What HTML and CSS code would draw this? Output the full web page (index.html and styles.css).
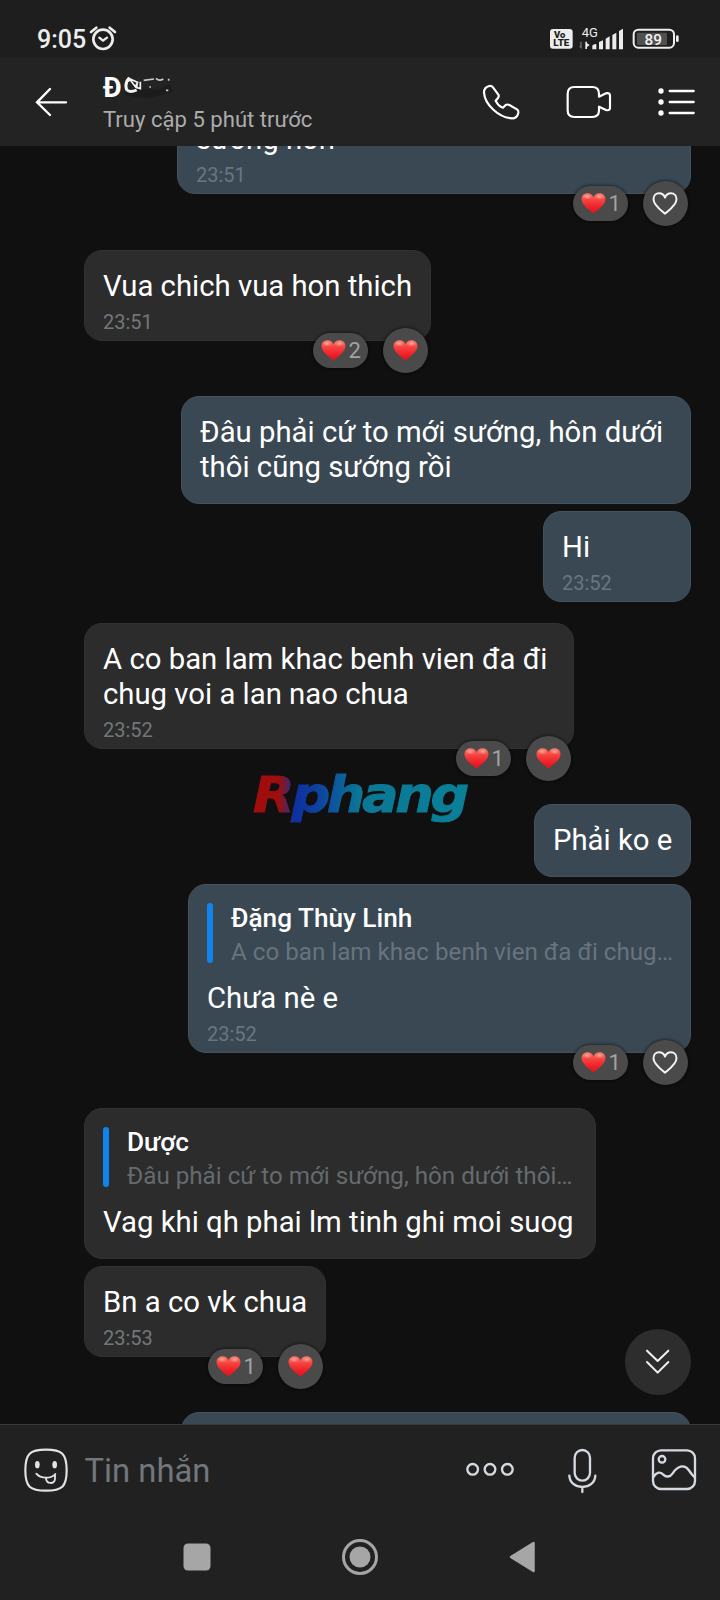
FILE: index.html
```html
<!DOCTYPE html>
<html lang="vi">
<head>
<meta charset="utf-8">
<title>Tin nhắn</title>
<link rel="stylesheet" href="styles.css">
</head>
<body>
<svg class="defs" width="0" height="0" aria-hidden="true">
  <defs>
    <linearGradient id="heart-fill" x1="0" y1="0" x2="0" y2="1">
      <stop offset="0" stop-color="#f9786a"/>
      <stop offset="0.35" stop-color="#f5423f"/>
      <stop offset="0.7" stop-color="#ee2029"/>
      <stop offset="1" stop-color="#d8141f"/>
    </linearGradient>
    <radialGradient id="heart-shine">
      <stop offset="0" stop-color="#ffc9b4" stop-opacity="0.85"/>
      <stop offset="1" stop-color="#ff8d7c" stop-opacity="0"/>
    </radialGradient>
    <symbol id="heart" viewBox="0 0 75 64">
      <path d="M37.500 63C30 55 1 38 1 19C1 8 9 1 19 1C28 1 34 6 37.500 13C41 6 47 1 56 1C66 1 74 8 74 19C74 38 45 55 37.500 63Z" fill="url(#heart-fill)"/>
      <ellipse cx="18" cy="11" rx="15" ry="9" fill="url(#heart-shine)"/>
      <ellipse cx="56" cy="11" rx="15" ry="9" fill="url(#heart-shine)"/>
    </symbol>
    <symbol id="heart-line" viewBox="0 0 78 70">
      <path d="M39 66C34 60 4 42 4 22C4 11 11 4 21 4C30 4 36 9 39 17C42 9 48 4 57 4C67 4 74 11 74 22C74 42 44 60 39 66Z" fill="none" stroke="#f4f4f4" stroke-width="6" stroke-linejoin="round"/>
    </symbol>
  </defs>
</svg>

<div class="phone">
  <div class="status">
    <span class="clock">9:05</span>
    <svg class="alarm" viewBox="267 70 84 90" width="28" height="30" fill="none" stroke="#ededed" stroke-linecap="round">
      <circle cx="309" cy="116" r="29" stroke-width="8"/>
      <path d="M273 94L289 81M345 94L329 81" stroke-width="8"/>
      <path d="M298 111L309 120L321 111" stroke-width="7" stroke-linejoin="round"/>
    </svg>
    <div class="status-right">
      <svg viewBox="567 70 75 90" width="25" height="30">
        <rect x="570" y="85" width="68" height="59" rx="9" fill="#ededed"/>
        <text class="volte" x="582" y="111" textLength="34" lengthAdjust="spacingAndGlyphs">Vo</text>
        <text class="volte" x="580" y="137" textLength="48" lengthAdjust="spacingAndGlyphs">LTE</text>
      </svg>
      <svg class="signal" viewBox="654 70 138 90" width="46" height="30" fill="#ededed">
        <text class="network" x="665" y="108">4G</text>
        <path d="M676 123H681V128L689 133L681 139V145H676Z"/>
        <path d="M665 123V145L657 136H661V123Z" fill="#777"/>
        <path d="M697 136Q697 132 709 130V146H697ZM717 124L729 119V146H717ZM737 114L749 107V146H737ZM757 103L769 96V146H757ZM777 91L789 84V146H777Z"/>
      </svg>
      <svg class="battery" viewBox="816 70 144 90" width="48" height="30">
        <rect x="821" y="87" width="121" height="54" rx="14" fill="none" stroke="#ededed" stroke-width="6"/>
        <rect x="831" y="96" width="90" height="37" rx="4" fill="#505050"/>
        <rect x="948" y="104" width="8" height="20" rx="4" fill="#ededed"/>
        <text class="charge" x="880" y="132" text-anchor="middle">89</text>
      </svg>
    </div>
  </div>

  <header class="header">
    <svg viewBox="102 246 105 120" width="35" height="40" fill="none" stroke="#fff" stroke-width="7" stroke-linecap="round">
      <path d="M198 307H111M150 267L111 307L150 345"/>
    </svg>
    <div class="contact">
      <div class="contact-name">Đ<svg class="scribble" viewBox="375 225 150 75" width="50" height="25" fill="none">
        <path d="M375 285L415 268L475 273L515 255L520 280L450 298L395 292Z" fill="#1c1c1c"/>
        <path d="M391 236Q376 252 383 272Q392 283 413 273" stroke="#f2f2f2" stroke-width="9"/>
        <path d="M389 236L409 263L417 248M392 239L415 250L413 266L424 269L424 248M381 249L393 244" stroke="#f2f2f2" stroke-width="5"/>
        <path d="M434 244L465 240M471 238Q480 248 493 240M451 264H456M501 274H508M509 239V245" stroke="#c8c8c8" stroke-width="5"/>
      </svg></div>
      <div class="contact-seen">Truy cập 5 phút trước</div>
    </div>
    <div class="actions">
      <svg viewBox="360 245 126 120" width="42" height="40" fill="none" stroke="#fff" stroke-width="6.500" stroke-linejoin="round">
        <path d="M372 276C372 266 380 259 388 257Q395 256 399 261L415 283Q418 288 414 293L407 301C412 311 420 319 429 322L437 314Q442 311 448 314L471 327Q476 331 475 337C473 347 466 354 456 354C417 352 374 313 372 276Z"/>
      </svg>
      <svg viewBox="615 246 144 120" width="48" height="40" fill="none" stroke="#fff" stroke-width="6.500" stroke-linejoin="round">
        <path d="M643 261H697Q717 261 717 281V290L738 280Q750 277 750 288V323Q750 333 738 330L717 320V331Q717 351 697 351H643Q623 351 623 331V281Q623 261 643 261Z"/>
      </svg>
      <svg viewBox="888 246 123 120" width="41" height="40" fill="#fff">
        <circle cx="903" cy="273" r="8"/><circle cx="903" cy="306" r="8"/><circle cx="903" cy="339" r="8"/>
        <path d="M929 273H1001M929 306H1001M929 339H1001" stroke="#fff" stroke-width="7" stroke-linecap="round"/>
      </svg>
    </div>
  </header>

  <main class="chat">
    <div class="bubble sent w-first reacted">
      <p class="text">sướng hơn</p>
      <time class="time">23:51</time>
      <div class="reactions"><span class="pill"><svg class="heart"><use href="#heart"/></svg>1</span><span class="round"><svg class="heart-o"><use href="#heart-line"/></svg></span></div>
    </div>
    <div class="bubble w-vua reacted">
      <p class="text">Vua chich vua hon thich</p>
      <time class="time">23:51</time>
      <div class="reactions"><span class="pill"><svg class="heart"><use href="#heart"/></svg>2</span><span class="round"><svg class="heart"><use href="#heart"/></svg></span></div>
    </div>
    <div class="bubble sent w-wide near">
      <p class="text">Đâu phải cứ to mới sướng, hôn dưới<br>thôi cũng sướng rồi</p>
    </div>
    <div class="bubble sent w-hi switch">
      <p class="text">Hi</p>
      <time class="time">23:52</time>
    </div>
    <div class="bubble w-aco reacted">
      <p class="text">A co ban lam khac benh vien đa đi<br>chug voi a lan nao chua</p>
      <time class="time">23:52</time>
      <div class="reactions"><span class="pill"><svg class="heart"><use href="#heart"/></svg>1</span><span class="round"><svg class="heart"><use href="#heart"/></svg></span></div>
    </div>
    <div class="bubble sent w-phai near">
      <p class="text">Phải ko e</p>
    </div>
    <div class="bubble sent w-quote reacted">
      <div class="quote">
        <div class="quote-name">Đặng Thùy Linh</div>
        <div class="quote-text">A co ban lam khac benh vien đa đi chug…</div>
      </div>
      <p class="text">Chưa nè e</p>
      <time class="time">23:52</time>
      <div class="reactions"><span class="pill"><svg class="heart"><use href="#heart"/></svg>1</span><span class="round"><svg class="heart-o"><use href="#heart-line"/></svg></span></div>
    </div>
    <div class="bubble w-vag near">
      <div class="quote">
        <div class="quote-name">Dược</div>
        <div class="quote-text">Đâu phải cứ to mới sướng, hôn dưới thôi…</div>
      </div>
      <p class="text">Vag khi qh phai lm tinh ghi moi suog</p>
    </div>
    <div class="bubble w-bn reacted">
      <p class="text">Bn a co vk chua</p>
      <time class="time">23:53</time>
      <div class="reactions"><span class="pill"><svg class="heart"><use href="#heart"/></svg>1</span><span class="round"><svg class="heart"><use href="#heart"/></svg></span></div>
    </div>
    <div class="bubble sent w-wide next"></div>

    <svg class="watermark" viewBox="0 0 225 64" width="225" height="64">
      <defs>
        <linearGradient id="brand" gradientUnits="userSpaceOnUse" x1="0" y1="0" x2="220" y2="0">
          <stop offset="0.13" stop-color="#a00d0d"/>
          <stop offset="0.17" stop-color="#5a2050"/>
          <stop offset="0.2" stop-color="#0e2fa0"/>
          <stop offset="0.3" stop-color="#0e3fa0"/>
          <stop offset="0.5" stop-color="#0b7796"/>
          <stop offset="1" stop-color="#0a8098"/>
        </linearGradient>
      </defs>
      <text class="brand" x="3" y="44" textLength="213" lengthAdjust="spacingAndGlyphs" fill="url(#brand)" stroke="url(#brand)">Rphang</text>
    </svg>

    <button class="jump" aria-label="Xuống cuối">
      <svg viewBox="855 145 78 84" width="26" height="28" fill="none" stroke="#f0f0f0" stroke-width="6" stroke-linecap="round" stroke-linejoin="round">
        <path d="M861 153L893 184L925 153M861 187L893 219L925 187"/>
      </svg>
    </button>
  </main>

  <footer class="composer">
    <svg viewBox="66 135 144 144" width="48" height="48" fill="none" stroke="#dfe3e8" stroke-width="6.500" stroke-linecap="round" stroke-linejoin="round">
      <path d="M138 146C186 146 200 158 200 208C200 258 186 269 138 269C90 269 76 258 76 208C76 158 90 146 138 146Z"/>
      <ellipse cx="112" cy="191" rx="7" ry="11" fill="#dfe3e8" stroke="none"/>
      <ellipse cx="164" cy="191" rx="7" ry="11" fill="#dfe3e8" stroke="none"/>
      <path d="M109 218C122 234 154 234 166 219M138 231C138 250 165 251 165 233V223" stroke-width="5.500"/>
    </svg>
    <span class="placeholder">Tin nhắn</span>
    <div class="tools">
      <svg viewBox="312 437 156 144" width="52" height="48" fill="none" stroke="#d5dae1" stroke-width="7">
        <circle cx="338" cy="507" r="16"/><circle cx="390" cy="507" r="16"/><circle cx="442" cy="507" r="16"/>
      </svg>
      <svg viewBox="620 438 96 144" width="32" height="48" fill="none" stroke="#d5dae1" stroke-width="7" stroke-linecap="round">
        <rect x="643" y="450" width="46" height="92" rx="23"/>
        <path d="M627 527C628 548 645 561 666 561C687 561 704 548 705 527M666 561V576"/>
      </svg>
      <svg viewBox="870 438 144 144" width="48" height="48" fill="none" stroke="#d5dae1" stroke-width="7" stroke-linecap="round">
        <rect x="879" y="451" width="126" height="116" rx="24"/>
        <circle cx="906" cy="478" r="10"/>
        <path d="M880 531C890 516 902 514 910 524C918 532 930 532 938 520C952 499 972 491 986 510C992 519 998 527 1004 532"/>
      </svg>
    </div>
  </footer>

  <nav class="nav">
    <svg viewBox="0 0 40 40" width="40" height="40"><rect x="6.500" y="6.500" width="27" height="27" rx="4.500" fill="#a6a6a6"/></svg>
    <svg viewBox="0 0 40 40" width="40" height="40"><circle cx="20" cy="20" r="16.500" fill="none" stroke="#a6a6a6" stroke-width="3"/><circle cx="20" cy="20" r="10.500" fill="#a6a6a6"/></svg>
    <svg viewBox="0 0 40 40" width="40" height="40"><path d="M9 20L31.500 6V34Z" fill="#a6a6a6" stroke="#a6a6a6" stroke-width="2.500" stroke-linejoin="round"/></svg>
  </nav>
</div>
</body>
</html>
```

FILE: styles.css
```css
* { box-sizing: border-box; }

body {
  margin: 0;
  background: #101010;
  font-family: Roboto, "Noto Sans", sans-serif;
}

svg { display: block; flex: none; }
.defs { position: absolute; }

.phone {
  display: flex;
  flex-direction: column;
  width: 720px;
  height: 1600px;
  overflow: hidden;
}

/* Status bar */
.status {
  display: flex;
  align-items: center;
  height: 58px;
  padding: 19px 40px 0 37px;
  background: #1e1e1e;
  color: #ededed;
}
.clock { width: 52px; padding-top: 2px; font-size: 25px; font-weight: 500; line-height: 30px; }
.status-right { display: flex; margin-left: auto; }
.signal { margin-left: 4px; }
.battery { margin-left: 8px; }
.volte { font: 900 25px Roboto, sans-serif; fill: #1e1e1e; }
.network { font: 400 39px Roboto, sans-serif; }
.charge { font: 500 46px Roboto, sans-serif; fill: #f2f2f2; }

/* Conversation header */
.header {
  display: flex;
  align-items: center;
  height: 88px;
  padding: 0 23px 0 34px;
  background: #232323;
  color: #fff;
}
.contact { margin-left: 34px; }
.contact-name { display: flex; margin-top: -1px; font-size: 28px; font-weight: 700; line-height: 33px; }
.scribble { margin: 3px 0 0 2px; }
.contact-seen { margin-top: 1px; color: #acacac; font-size: 22.1px; line-height: 28px; white-space: nowrap; }
.actions { display: flex; gap: 43px; margin-left: auto; }

/* Messages */
.chat {
  position: relative;
  display: flex;
  flex: 1;
  flex-direction: column;
  align-items: flex-start;
  min-height: 0;
  padding: 0 29px 0 84px;
  overflow: hidden;
  background: #101010;
}
.bubble {
  position: relative;
  flex: none;
  padding: 18px 18px;
  border: 1px solid #313131;
  border-radius: 18px;
  background: #2c2c2c;
  color: #fff;
}
.bubble:has(.time) { padding-bottom: 6px; }
.sent { align-self: flex-end; border-color: #43525d; background: #3a4853; }
.text { margin: 0; font-size: 29.3px; line-height: 35px; white-space: nowrap; }
.time { display: block; margin-top: 6px; color: #72777b; font-size: 20px; line-height: 24px; }
.sent .time { color: #687681; }

.reacted { margin-bottom: 55px; }
.near { margin-bottom: 7px; }
.switch { margin-bottom: 21px; }

.w-first { width: 514px; margin-top: -43px; margin-bottom: 56px; }
.w-vua { width: 347px; }
.w-wide { width: 510px; }
.w-hi { width: 148px; }
.w-aco { width: 490px; }
.w-phai { width: 157px; }
.w-quote { width: 503px; }
.w-vag { width: 512px; }
.w-bn { width: 242px; }
.next { height: 90px; }

.quote {
  position: relative;
  height: 60px;
  margin-bottom: 17px;
  padding-left: 24px;
  white-space: nowrap;
}
.quote::before {
  position: absolute;
  inset: 0 auto 0 0;
  width: 6px;
  border-radius: 3px;
  background: #0f84ec;
  content: "";
}
.quote + .text { padding-top: 1px; }
.quote-name { font-size: 26.2px; font-weight: 500; line-height: 31px; }
.quote-text { margin-top: 3px; color: #646b6e; font-size: 24.2px; line-height: 30px; }
.sent .quote-text { color: #66747d; }

.reactions {
  position: absolute;
  right: 2.5px;
  bottom: -32.5px;
  display: flex;
  gap: 15px;
  align-items: center;
}
.pill, .round {
  display: flex;
  align-items: center;
  background: #4a4a4a;
  box-shadow: 0 0 3px 1px rgba(0, 0, 0, 0.45);
}
.pill {
  gap: 3px;
  width: 55px;
  height: 35px;
  padding-left: 8px;
  border-radius: 18px;
  color: #a2a2a2;
  font-size: 22px;
}
.round { justify-content: center; width: 45px; height: 45px; border-radius: 50%; }
.heart { width: 25px; height: 21px; }
.heart-o { width: 26px; height: 23px; }

.watermark { position: absolute; left: 250px; top: 622px; }
.brand {
  font: italic 700 49px "DejaVu Sans", sans-serif;
  letter-spacing: -3px;
  stroke-width: 1px;
}

.jump {
  position: absolute;
  right: 29px;
  top: 1183px;
  display: flex;
  align-items: center;
  justify-content: center;
  width: 66px;
  height: 66px;
  padding: 0;
  border: 0;
  border-radius: 50%;
  background: #2d2d2d;
}

/* Composer and system navigation */
.composer {
  display: flex;
  align-items: center;
  height: 90px;
  padding: 0 22px;
  border-top: 1px solid #393939;
  background: #212121;
}
.placeholder { margin-left: 14.5px; padding-top: 2px; color: #70777d; font-size: 32.8px; line-height: 40px; }
.tools { display: flex; gap: 51px; margin-left: auto; }
.nav {
  display: flex;
  align-items: center;
  justify-content: center;
  gap: 122.5px;
  height: 86px;
  padding-right: 1px;
  background: #212121;
}
```
